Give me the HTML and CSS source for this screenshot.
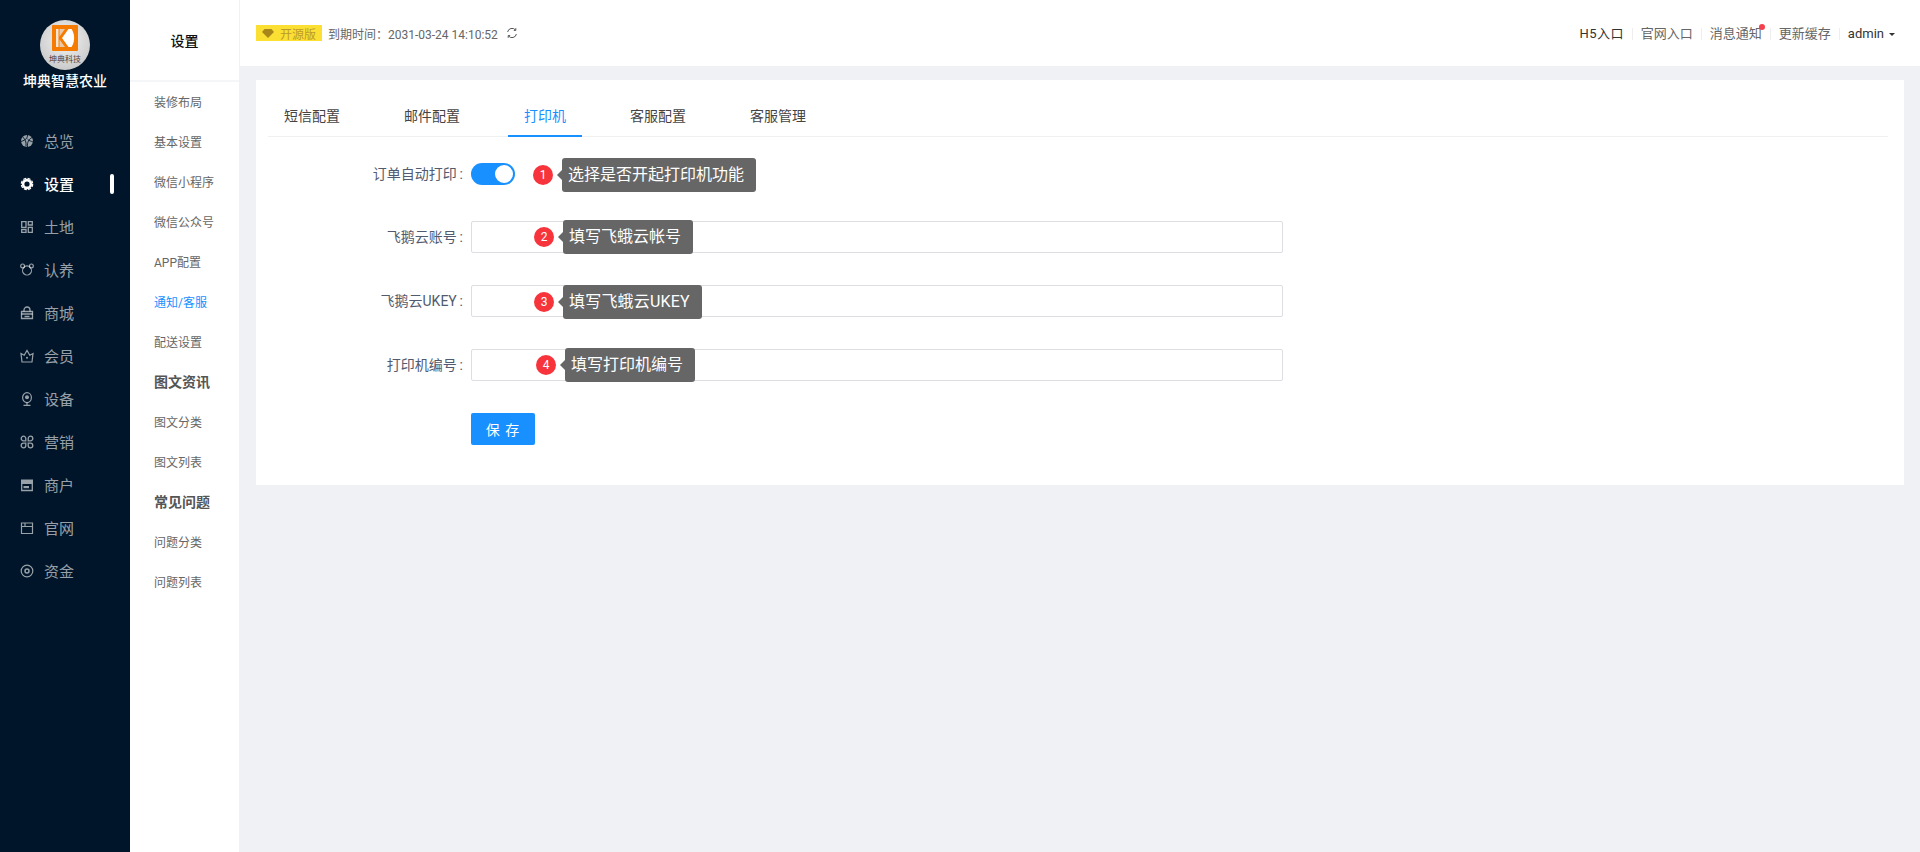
FILE: index.html
```html
<!DOCTYPE html>
<html>

<head>
  <meta charset="UTF-8">
  <title>设置 - 坤典智慧农业</title>
  <link rel="stylesheet" href="styles.css">
</head>

<body>

  <aside class="sider">
    <div class="brand">
      <div class="logo">
        <svg class="logo-mark" viewBox="0 0 26 26" width="26" height="26">
          <rect width="26" height="26" rx="1" fill="#f57c00" />
          <path d="M4 4h2.500v18H4z" fill="#f3e6d8" />
          <path d="M7.500 4h5.500L7.500 11.500zM7.500 14.500L13 22H7.500z" fill="#e9c9a8" />
          <path d="M10 13L16.500 4h3c3.500 5 3.500 13 0 18h-3z" fill="#fff" />
        </svg>
        <span class="logo-text">坤典科技</span>
      </div>
      <div class="brand-name">坤典智慧农业</div>
    </div>

    <nav class="menu">
      <a class="menu-item">
        <svg class="menu-icon" viewBox="0 0 14 14"><circle cx="7" cy="7" r="6" fill="currentColor" /><path d="M2.500 3c2.500 1.500 4 4.500 3.500 9.500M7.500 1c0 3-1.500 5-6.500 6.500M12 3.500C9 5 7 8 7.500 13M13 8c-2-1-4-1-5.500-3" stroke="#001529" stroke-width=".9" fill="none" /></svg>
        总览
      </a>
      <a class="menu-item active">
        <svg class="menu-icon" viewBox="0 0 14 14" fill="none" stroke="currentColor"><circle cx="7" cy="7" r="3.900" stroke-width="2.600" /><circle cx="7" cy="7" r="5.700" stroke-width="1.200" stroke-dasharray="3 1.470" /></svg>
        设置
      </a>
      <a class="menu-item">
        <svg class="menu-icon" viewBox="0 0 14 14" fill="none" stroke="currentColor" stroke-width="1.300"><path d="M1.700 1.700h4.300v5.600H1.700zM8.300 1.700h4v3.300h-4zM8.300 7.300h4v5h-4zM1.700 9.500h4.300v2.800H1.700z" /></svg>
        土地
      </a>
      <a class="menu-item">
        <svg class="menu-icon" viewBox="0 0 14 14" fill="none" stroke="currentColor" stroke-width="1.200"><path d="M3.800 4.600a4.400 4.400 0 1 0 6.400 0" /><path d="M3.800 4.600a3.800 3.800 0 0 1 6.400 0" /><circle cx="2.600" cy="2.900" r="1.900" /><circle cx="11.400" cy="2.900" r="1.900" /></svg>
        认养
      </a>
      <a class="menu-item">
        <svg class="menu-icon" viewBox="0 0 14 14" fill="none" stroke="currentColor" stroke-width="1.300"><path d="M1.500 5.500h11v7h-11z" /><path d="M4 5.500V4a3 3 0 0 1 6 0v1.500" /><path d="M1.500 8h11M4.500 10.500h5" /></svg>
        商城
      </a>
      <a class="menu-item">
        <svg class="menu-icon" viewBox="0 0 14 14" fill="none" stroke="currentColor" stroke-width="1.200"><path d="M1 4.500l3.200 1.800L7 1.500l2.800 4.800L13 4.500l-1 8.500H2z" /><circle cx="7" cy="8.700" r="1" fill="currentColor" stroke="none" /></svg>
        会员
      </a>
      <a class="menu-item">
        <svg class="menu-icon" viewBox="0 0 14 14" fill="none" stroke="currentColor" stroke-width="1.200"><ellipse cx="7" cy="5.600" rx="4.400" ry="5" /><circle cx="7" cy="5.300" r="2" fill="currentColor" stroke="none" /><path d="M3.500 13.300h7M7 10.600v2.700" /></svg>
        设备
      </a>
      <a class="menu-item">
        <svg class="menu-icon" viewBox="0 0 14 14" fill="none" stroke="currentColor" stroke-width="1.300"><path d="M5.800 5.800H3.500a2.300 2.300 0 1 1 2.300-2.300zM8.200 5.800V3.500a2.300 2.300 0 1 1 2.300 2.300zM5.800 8.200v2.300a2.300 2.300 0 1 1-2.300-2.300zM8.200 8.200h2.300a2.300 2.300 0 1 1-2.300 2.300z" /></svg>
        营销
      </a>
      <a class="menu-item">
        <svg class="menu-icon" viewBox="0 0 14 14"><path d="M1 1.500h12v4.500H1z" fill="currentColor" /><path d="M1.700 6v6.500h10.600V6" fill="none" stroke="currentColor" stroke-width="1.300" /><path d="M3.500 8h5.500v2.200H3.500z" fill="currentColor" /></svg>
        商户
      </a>
      <a class="menu-item">
        <svg class="menu-icon" viewBox="0 0 14 14" fill="none" stroke="currentColor" stroke-width="1.200"><path d="M1.500 2h11v10.500h-11zM1.500 5.500h11M5 2v3.500" /></svg>
        官网
      </a>
      <a class="menu-item">
        <svg class="menu-icon" viewBox="0 0 14 14" fill="none" stroke="currentColor"><circle cx="7" cy="7" r="5.800" stroke-width="1.200" /><circle cx="7" cy="7" r="2" stroke-width="1.500" /></svg>
        资金
      </a>
    </nav>
  </aside>

  <aside class="subnav">
    <h2 class="subnav-title">设置</h2>
    <ul class="subnav-list">
      <li>装修布局</li>
      <li>基本设置</li>
      <li>微信小程序</li>
      <li>微信公众号</li>
      <li>APP配置</li>
      <li class="current">通知/客服</li>
      <li>配送设置</li>
      <li class="group">图文资讯</li>
      <li>图文分类</li>
      <li>图文列表</li>
      <li class="group">常见问题</li>
      <li>问题分类</li>
      <li>问题列表</li>
    </ul>
  </aside>

  <div class="main">
    <header class="topbar">
      <div class="topbar-left">
        <span class="edition">
          <svg viewBox="0 0 12 9" width="12" height="9"><path d="M2.500 0h7L12 3 6 9 0 3z" fill="#a8861a" /></svg>
          开源版
        </span>
        <span class="expire">到期时间：2031-03-24 14:10:52</span>
        <svg class="refresh" viewBox="0 0 12 12" width="12" height="12" fill="none" stroke="#555" stroke-width="1"><path d="M1.600 5A4.500 4.500 0 0 1 9.500 3M10.400 7A4.500 4.500 0 0 1 2.500 9" /><path d="M9.800 1.200v2.200H7.800M2.200 10.800V8.600h2" /></svg>
      </div>
      <div class="topbar-right">
        <a class="top-link dark first">H5入口</a>
        <a class="top-link">官网入口</a>
        <a class="top-link notice">消息通知<i class="dot"></i></a>
        <a class="top-link">更新缓存</a>
        <a class="top-link dark user">admin<i class="caret"></i></a>
      </div>
    </header>

    <section class="card">
      <div class="tabs">
        <a class="tab">短信配置</a>
        <a class="tab">邮件配置</a>
        <a class="tab active">打印机</a>
        <a class="tab">客服配置</a>
        <a class="tab">客服管理</a>
      </div>

      <form class="form">
        <div class="row row-switch">
          <label class="row-label">订单自动打印&thinsp;:</label>
          <div class="row-field">
            <span class="switch"><i class="switch-knob"></i></span>
            <div class="hint hint-1">
              <span class="hint-num">1</span>
              <span class="hint-box">选择是否开起打印机功能</span>
            </div>
          </div>
        </div>

        <div class="row">
          <label class="row-label">飞鹅云账号&thinsp;:</label>
          <div class="row-field">
            <input class="input" type="text">
            <div class="hint hint-2">
              <span class="hint-num">2</span>
              <span class="hint-box">填写飞蛾云帐号</span>
            </div>
          </div>
        </div>

        <div class="row">
          <label class="row-label">飞鹅云UKEY&thinsp;:</label>
          <div class="row-field">
            <input class="input" type="text">
            <div class="hint hint-3">
              <span class="hint-num">3</span>
              <span class="hint-box">填写飞蛾云UKEY</span>
            </div>
          </div>
        </div>

        <div class="row">
          <label class="row-label">打印机编号&thinsp;:</label>
          <div class="row-field">
            <input class="input" type="text">
            <div class="hint hint-4">
              <span class="hint-num">4</span>
              <span class="hint-box">填写打印机编号</span>
            </div>
          </div>
        </div>

        <div class="row row-submit">
          <div class="row-label"></div>
          <div class="row-field">
            <button class="btn-save" type="button">保 存</button>
          </div>
        </div>
      </form>
    </section>
  </div>

</body>

</html>
```

FILE: styles.css
```css
* {
  box-sizing: border-box;
}

html,
body {
  height: 100%;
}

body {
  margin: 0;
  display: flex;
  background: #f0f1f5;
  color: #515a6e;
  font-family: Roboto, "Noto Sans CJK SC", sans-serif;
  font-size: 12px;
  overflow: hidden;
}

/* dark sidebar */
.sider {
  flex: 0 0 130px;
  background: #001529;
}

.brand {
  display: flex;
  flex-direction: column;
  align-items: center;
  padding-top: 20px;
}

.logo {
  width: 50px;
  height: 50px;
  border-radius: 50%;
  background: radial-gradient(circle at 50% 40%, #f4f4f4, #bdbdbd);
  display: flex;
  flex-direction: column;
  align-items: center;
  padding-top: 5px;
  overflow: hidden;
}

.logo-mark {
  display: block;
  flex: none;
}

.logo-text {
  margin-top: 4px;
  font-size: 8px;
  line-height: 10px;
  color: #5a3d34;
  white-space: nowrap;
}

.brand-name {
  margin-top: 1px;
  font-size: 14px;
  line-height: 20px;
  font-weight: 500;
  color: #fff;
}

.menu {
  margin-top: 28px;
}

.menu-item {
  position: relative;
  display: flex;
  align-items: center;
  height: 43px;
  padding-left: 20px;
  font-size: 15px;
  color: rgba(255, 255, 255, 0.6);
}

.menu-icon {
  width: 14px;
  height: 14px;
  margin-right: 10px;
  flex: none;
}

.menu-item.active {
  color: #fff;
  font-weight: 500;
}

.menu-item.active::after {
  content: "";
  position: absolute;
  left: 110px;
  top: 12px;
  width: 4px;
  height: 20px;
  border-radius: 2px;
  background: #fff;
}

/* second level menu */
.subnav {
  flex: 0 0 110px;
  background: #fff;
  border-right: 1px solid #f0f1f5;
}

.subnav-title {
  margin: 0;
  height: 82px;
  border-bottom: 2px solid #f5f6f8;
  text-align: center;
  line-height: 82px;
  font-size: 14px;
  font-weight: 500;
  color: #111;
}

.subnav-list {
  list-style: none;
  margin: 0;
  padding: 1px 0 0;
}

.subnav-list li {
  height: 40px;
  line-height: 40px;
  padding-left: 24px;
  font-size: 12px;
  color: #666;
  white-space: nowrap;
}

.subnav-list li.current {
  color: #1890ff;
}

.subnav-list li.group {
  font-size: 14px;
  font-weight: 700;
  line-height: 38px;
  color: #555;
}

/* right hand side */
.main {
  flex: 1;
  min-width: 0;
}

.topbar {
  height: 66px;
  background: #fff;
  display: flex;
  align-items: center;
  justify-content: space-between;
  padding: 0 25px 0 16px;
}

.topbar-left {
  display: flex;
  align-items: center;
}

.edition {
  display: flex;
  align-items: center;
  gap: 6px;
  width: 66px;
  height: 16px;
  padding-left: 6px;
  background: #fbe033;
  color: #bd9a28;
  font-size: 12px;
  white-space: nowrap;
}

.expire {
  margin-left: 6px;
  color: #666;
  font-size: 12px;
}

.refresh {
  margin-left: 8px;
}

.topbar-right {
  display: flex;
  align-items: center;
  padding-top: 2px;
}

.top-link {
  position: relative;
  font-size: 13px;
  line-height: 18px;
  color: #666;
  padding: 0 8px 0 9px;
  white-space: nowrap;
}

.top-link + .top-link::before {
  content: "";
  position: absolute;
  left: 0;
  top: 3px;
  width: 1px;
  height: 12px;
  background: #eee;
}

.top-link.dark {
  color: #333;
}

.top-link.first {
  letter-spacing: 0.4px;
}

.top-link.user {
  padding-right: 0;
}

.dot {
  position: absolute;
  right: 5px;
  top: -1px;
  width: 6px;
  height: 6px;
  border-radius: 50%;
  background: #f5414d;
}

.caret {
  display: inline-block;
  margin-left: 5px;
  vertical-align: middle;
  border-left: 3px solid transparent;
  border-right: 3px solid transparent;
  border-top: 3px solid #333;
}

.card {
  margin: 14px 16px 0;
  padding: 0 16px 40px 12px;
  background: #fff;
}

.tabs {
  display: flex;
  height: 57px;
  padding-top: 15px;
  border-bottom: 1px solid #f0f0f0;
}

.tab {
  height: 42px;
  line-height: 42px;
  padding: 0 16px;
  margin-right: 32px;
  font-size: 14px;
  white-space: nowrap;
  color: #444;
}

.tab.active {
  color: #1890ff;
  border-bottom: 2px solid #1890ff;
}

.form {
  padding-top: 21px;
}

.row {
  display: flex;
  align-items: center;
  height: 32px;
  margin-bottom: 32px;
}

.row-switch {
  height: 31px;
}

.row-submit {
  margin-bottom: 0;
}

.row-label {
  flex: 0 0 195px;
  padding-bottom: 2px;
  text-align: right;
  font-size: 14px;
  color: #515a6e;
  white-space: nowrap;
}

.row-field {
  position: relative;
  flex: 0 0 812px;
  margin-left: 8px;
  height: 100%;
  display: flex;
  align-items: center;
}

.input {
  width: 100%;
  height: 32px;
  border: 1px solid #dcdee2;
  border-radius: 2px;
  background: #fff;
  outline: none;
}

.switch {
  position: relative;
  width: 44px;
  height: 22px;
  border-radius: 11px;
  background: #1890ff;
}

.switch-knob {
  position: absolute;
  right: 2px;
  top: 2px;
  width: 18px;
  height: 18px;
  border-radius: 50%;
  background: #fff;
}

/* numbered notes laid over the form */
.hint {
  position: absolute;
  display: flex;
  align-items: center;
  gap: 9px;
}

.hint-1 {
  left: 62px;
  top: 0;
}

.hint-2 {
  left: 63px;
  top: -1px;
}

.hint-3 {
  left: 63px;
  top: 0;
}

.hint-3 .hint-box {
  letter-spacing: 0.2px;
}

.hint-4 {
  left: 65px;
  top: -1px;
}

.hint-num {
  width: 20px;
  height: 20px;
  border-radius: 50%;
  background: #f7343b;
  color: #fff;
  font-size: 12px;
  line-height: 20px;
  text-align: center;
}

.hint-box {
  position: relative;
  height: 34px;
  line-height: 33px;
  padding: 0 12px 0 6px;
  border-radius: 3px;
  background: #666;
  color: #fff;
  font-size: 16px;
  white-space: nowrap;
}

.hint-box::before {
  content: "";
  position: absolute;
  left: -5px;
  top: 12px;
  border-top: 5px solid transparent;
  border-bottom: 5px solid transparent;
  border-right: 5px solid #666;
}

.btn-save {
  width: 64px;
  height: 32px;
  border: 0;
  border-radius: 2px;
  background: #1890ff;
  color: #fff;
  font-family: inherit;
  font-size: 14px;
  letter-spacing: 1px;
}
```
